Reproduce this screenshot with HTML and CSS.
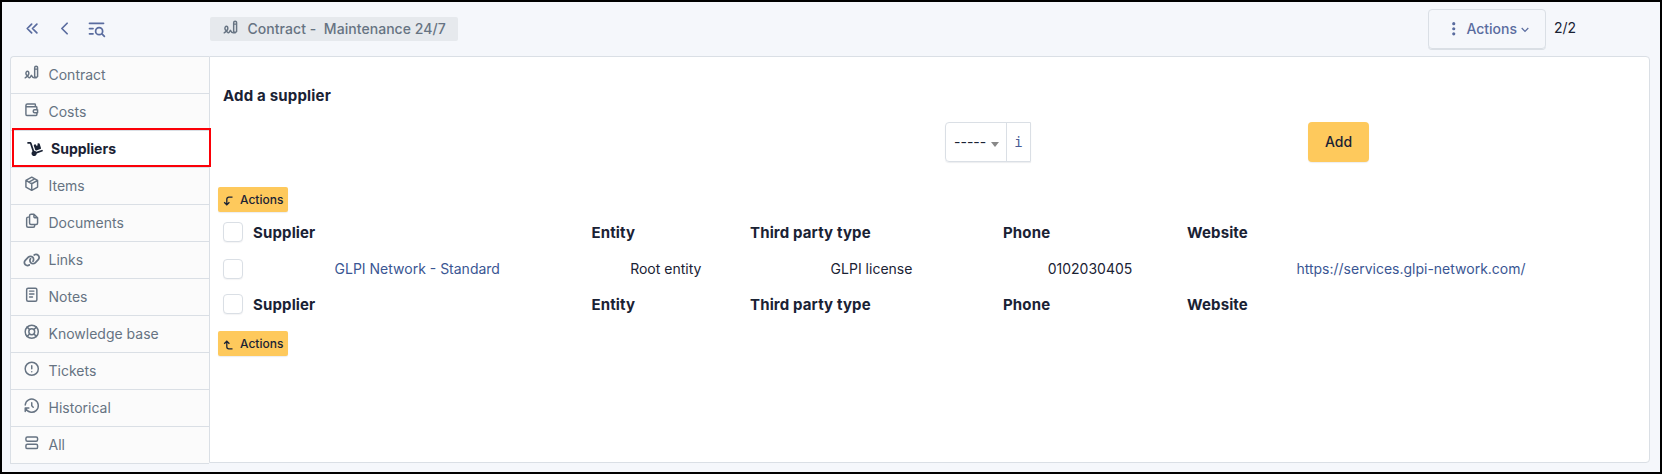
FILE: index.html
```html
<!DOCTYPE html>
<html lang="en">
<head>
<meta charset="utf-8">
<title>Contract - Maintenance 24/7</title>
<link rel="stylesheet" href="styles.css">
</head>
<body>
<div class="frame">
  <header class="topbar">
    <nav class="nav-icons">
      <svg class="ti nav-icon" viewBox="0 0 24 24"><path d="M11 7l-5 5l5 5M17 7l-5 5l5 5"/></svg>
      <svg class="ti nav-icon" viewBox="0 0 24 24"><path d="M15 6l-6 6l6 6"/></svg>
      <svg class="ti nav-icon" viewBox="0 0 24 24"><circle cx="15" cy="15" r="4"/><path d="M18.5 18.5l2.5 2.5M4 6h16M4 12h4M4 18h4"/></svg>
    </nav>
    <div class="badge">
      <svg class="ti" viewBox="0 0 24 24"><path d="M3 19c3.333 -2 5 -4 5 -6c0 -3 -1 -3 -2 -3s-2.032 1.085 -2 3c.034 2.048 1.658 2.877 2.5 4c1.5 2 2.5 2.5 3.5 1c.667 -1 1.167 -1.833 1.5 -2.5c1 2.333 2.333 3.5 4 3.5h2.5M20 17v-12c0 -1.121 -.879 -2 -2 -2s-2 .879 -2 2v12l2 2l2 -2zM16 7h4"/></svg>
      <span class="badge-text">Contract -&nbsp; Maintenance 24/7</span>
    </div>
    <div class="top-right">
      <button class="btn-outline">
        <svg class="ti dots" viewBox="0 0 24 24"><path d="M12 4a1 1 0 1 0 0 2a1 1 0 1 0 0 -2M12 11a1 1 0 1 0 0 2a1 1 0 1 0 0 -2M12 18a1 1 0 1 0 0 2a1 1 0 1 0 0 -2"/></svg>
        <span>Actions</span>
        <svg class="caret" viewBox="0 0 8 6"><path d="M0.7 1l3.3 3.4l3.3 -3.4"/></svg>
      </button>
      <span class="pager">2/2</span>
    </div>
  </header>
  <main class="body">
    <ul class="tabs">
      <li class="tab"><svg class="ti" viewBox="0 0 24 24"><path d="M3 19c3.333 -2 5 -4 5 -6c0 -3 -1 -3 -2 -3s-2.032 1.085 -2 3c.034 2.048 1.658 2.877 2.5 4c1.5 2 2.5 2.5 3.5 1c.667 -1 1.167 -1.833 1.5 -2.5c1 2.333 2.333 3.5 4 3.5h2.5M20 17v-12c0 -1.121 -.879 -2 -2 -2s-2 .879 -2 2v12l2 2l2 -2zM16 7h4"/></svg><span>Contract</span></li>
      <li class="tab"><svg class="ti" viewBox="0 0 24 24"><path d="M17 8v-3a1 1 0 0 0 -1 -1h-10a2 2 0 0 0 0 4h12a1 1 0 0 1 1 1v3m0 4v3a1 1 0 0 1 -1 1h-12a2 2 0 0 1 -2 -2v-12M20 12v4h-4a2 2 0 0 1 0 -4h4"/></svg><span>Costs</span></li>
      <li class="tab active"><svg class="fa dolly" viewBox="0 0 576 512"><path d="M0 32C0 14.3 14.3 0 32 0h72.9c27.5 0 52 17.6 60.7 43.8L257.7 320c30.1 .5 56.8 14.9 74 37l202.1-67.4c16.8-5.6 34.9 3.5 40.5 20.2s-3.5 34.9-20.2 40.5L352 417.7c-.9 52.2-43.5 94.3-96 94.3c-53 0-96-43-96-96c0-30.8 14.5-58.2 37-75.8L104.9 64H32C14.3 64 0 49.7 0 32zM244.8 134.5c-5.5-16.8 3.7-34.9 20.5-40.3L311 79.4l19.8 60.9 60.9-19.8L371.8 59.6l45.7-14.8c16.8-5.5 34.9 3.7 40.3 20.5l49.4 152.2c5.5 16.8-3.7 34.9-20.5 40.3L334.5 307.2c-16.8 5.5-34.9-3.7-40.3-20.5L244.8 134.5z"/></svg><span>Suppliers</span></li>
      <li class="tab"><svg class="ti" viewBox="0 0 24 24"><path d="M12 3l8 4.5v9l-8 4.5l-8 -4.5v-9l8 -4.5M12 12l8 -4.5M12 12v9M12 12l-8 -4.5M16 5.25l-8 4.5"/></svg><span>Items</span></li>
      <li class="tab"><svg class="ti" viewBox="0 0 24 24"><path d="M15 3v4a1 1 0 0 0 1 1h4M18 17h-7a2 2 0 0 1 -2 -2v-10a2 2 0 0 1 2 -2h4l5 5v7a2 2 0 0 1 -2 2zM16 17v2a2 2 0 0 1 -2 2h-7a2 2 0 0 1 -2 -2v-10a2 2 0 0 1 2 -2h2"/></svg><span>Documents</span></li>
      <li class="tab"><svg class="fa link" viewBox="0 0 640 512"><path d="M579.8 267.7c56.5-56.5 56.5-148 0-204.5c-50-50-128.8-56.5-186.3-15.4l-1.6 1.1c-14.4 10.3-17.7 30.3-7.4 44.6s30.3 17.7 44.6 7.4l1.6-1.1c32.1-22.9 76-19.3 103.8 8.6c31.5 31.5 31.5 82.5 0 114L422.3 334.8c-31.5 31.5-82.5 31.5-114 0c-27.9-27.9-31.5-71.8-8.6-103.8l1.1-1.6c10.3-14.4 6.9-34.4-7.4-44.6s-34.4-6.9-44.6 7.4l-1.1 1.6C206.5 251.2 213 330 263 380c56.5 56.5 148 56.5 204.5 0L579.8 267.7zM60.2 244.3c-56.5 56.5-56.5 148 0 204.5c50 50 128.8 56.5 186.3 15.4l1.6-1.1c14.4-10.3 17.7-30.3 7.4-44.6s-30.3-17.7-44.6-7.4l-1.6 1.1c-32.1 22.9-76 19.3-103.8-8.6C74 372 74 321 105.5 289.5L217.7 177.2c31.5-31.5 82.5-31.5 114 0c27.9 27.9 31.5 71.8 8.6 103.9l-1.1 1.6c-10.3 14.4-6.9 34.4 7.4 44.6s34.4 6.9 44.6-7.4l1.1-1.6C433.5 260.8 427 182 377 132c-56.5-56.5-148-56.5-204.5 0L60.2 244.3z"/></svg><span>Links</span></li>
      <li class="tab"><svg class="ti" viewBox="0 0 24 24"><rect x="5" y="3" width="14" height="18" rx="2"/><path d="M9 7h6M9 11h6M9 15h4"/></svg><span>Notes</span></li>
      <li class="tab"><svg class="ti" viewBox="0 0 24 24"><circle cx="12" cy="12" r="4"/><circle cx="12" cy="12" r="9"/><path d="M15 15l3.35 3.35M9 15l-3.35 3.35M5.65 5.65l3.35 3.35M18.35 5.65l-3.35 3.35"/></svg><span>Knowledge base</span></li>
      <li class="tab"><svg class="ti" viewBox="0 0 24 24"><circle cx="12" cy="12" r="9"/><path d="M12 8v4M12 16h.01"/></svg><span>Tickets</span></li>
      <li class="tab"><svg class="ti" viewBox="0 0 24 24"><path d="M12 8v4l2 2M3.05 11a9 9 0 1 1 .5 4m-.5 5v-5h5"/></svg><span>Historical</span></li>
      <li class="tab"><svg class="ti" viewBox="0 0 24 24"><rect x="4" y="4" width="16" height="6" rx="2"/><rect x="4" y="14" width="16" height="6" rx="2"/></svg><span>All</span></li>
    </ul>
    <section class="panel">
      <h2 class="title">Add a supplier</h2>
      <form class="add-form">
        <div class="picker">
          <span class="select">-----<i class="arrow"></i></span>
          <span class="info">i</span>
        </div>
        <button class="btn-add" type="button">Add</button>
      </form>
      <button class="btn-small">
        <svg viewBox="0 0 10 10"><path d="M9.5 1.2h-3.7a2 2 0 0 0 -2 2v5.3M1.2 6.2l2.6 2.6l2.6 -2.6"/></svg>
        <span>Actions</span>
      </button>
      <div class="grid">
        <div class="row head"><span class="check"></span><b>Supplier</b><b>Entity</b><b>Third party type</b><b>Phone</b><b>Website</b></div>
        <div class="row data"><span class="check"></span><a>GLPI Network - Standard</a><span>Root entity</span><span>GLPI license</span><span>0102030405</span><a>https://services.glpi-network.com/</a></div>
        <div class="row foot"><span class="check"></span><b>Supplier</b><b>Entity</b><b>Third party type</b><b>Phone</b><b>Website</b></div>
      </div>
      <button class="btn-small">
        <svg viewBox="0 0 10 10"><path d="M9.5 8.8h-3.7a2 2 0 0 1 -2 -2v-5.3M1.2 3.8l2.6 -2.6l2.6 2.6"/></svg>
        <span>Actions</span>
      </button>
    </section>
  </main>
</div>
</body>
</html>
```
FILE: styles.css
```css
* { box-sizing: border-box; }

body {
  margin: 0;
  font-family: Inter, "Noto Sans", sans-serif;
  font-size: 14px;
  line-height: 20px;
  color: #1a2234;
}

button { font: inherit; color: inherit; margin: 0; }

.frame {
  width: 1662px;
  height: 474px;
  border: 2px solid #000;
  background: #f5f7fb;
  overflow: hidden;
}

.ti {
  width: 17.5px;
  height: 17.5px;
  flex: none;
  fill: none;
  stroke: currentColor;
  stroke-width: 2;
  stroke-linecap: round;
  stroke-linejoin: round;
}

.fa { flex: none; fill: currentColor; }

/* Top bar */
.topbar {
  display: flex;
  align-items: flex-start;
  height: 54px;
  padding: 7px 84px 0 20px;
}

.nav-icons {
  display: flex;
  gap: 11px;
  width: 188px;
  padding-top: 9px;
  color: #5a6c9f;
}

.nav-icon { width: 21px; height: 21px; }

.badge {
  display: flex;
  align-items: center;
  gap: 8px;
  width: 248px;
  height: 24px;
  margin-top: 8px;
  padding-left: 12px;
  border-radius: 2px;
  background: #e6e9ed;
  color: #667382;
  font-weight: 500;
  letter-spacing: 0.05px;
  white-space: nowrap;
}

.badge .ti { margin-top: -3px; }

.top-right {
  display: flex;
  gap: 8px;
  margin-left: auto;
}

.btn-outline {
  display: flex;
  align-items: center;
  width: 118px;
  height: 40px;
  padding: 0 0 0 16px;
  border: 1px solid #dadfe5;
  border-radius: 4px;
  background: transparent;
  box-shadow: 0 1px 0 #dadfe5;
  color: #5a6c9f;
  font-weight: 500;
}

.dots { margin: -1px 4px 0 0; stroke-width: 2.4; }

.caret {
  width: 8px;
  height: 6px;
  margin: 2px 0 0 4px;
  fill: none;
  stroke: currentColor;
  stroke-width: 1.2;
}

.pager { padding-top: 9px; }

/* Side tabs */
.body {
  display: flex;
  align-items: flex-start;
  padding-left: 8px;
}

.tabs {
  width: 199px;
  margin: 0;
  padding: 0;
  list-style: none;
  border: 1px solid #dadfe5;
  border-right: 0;
  border-radius: 4px 0 0 0;
}

.tab {
  display: flex;
  align-items: center;
  gap: 8px;
  height: 37px;
  padding-left: 12px;
  border-bottom: 1px solid #dadfe5;
  background: #fbfbfb;
  color: #667382;
  font-size: 14px;
}

.tab:first-child { border-top-left-radius: 4px; }
.tab:last-child { height: 36px; border-bottom: 0; }
.tab .ti { margin-top: -4px; }

.tab.active {
  position: relative;
  padding-left: 16px;
  background: #fff;
  color: #1a2234;
  font-weight: 700;
}

.tab.active::after {
  content: "";
  position: absolute;
  inset: -3px -2px 0 1px;
  border: 2px solid #fb0007;
}

.dolly { width: 16px; height: 14px; margin-top: -1px; }
.link { width: 17.5px; height: 14px; margin-top: -1px; }

/* Content panel */
.panel {
  width: 1441px;
  height: 407px;
  padding: 29px 9px 0 8px;
  border: 1px solid #dadfe5;
  border-radius: 0 4px 4px 0;
  background: #fff;
}

.title {
  margin: 0 0 16px 5px;
  font-size: 15px;
  line-height: 20px;
  font-weight: 700;
  letter-spacing: 0.18px;
}

.add-form {
  display: flex;
  align-items: center;
  height: 40px;
  margin-bottom: 25px;
  padding-left: 727px;
}

.picker {
  display: flex;
  width: 86px;
  height: 40px;
  margin-right: 277px;
  border: 1px solid #dadfe5;
  border-radius: 4px 0 0 4px;
  box-shadow: 0 1px 1px rgba(30, 41, 59, 0.08);
}

.select {
  display: flex;
  align-items: center;
  width: 61px;
  padding-left: 8px;
  border-right: 1px solid #dadfe5;
}

.arrow {
  margin: 4px 0 0 5px;
  border: 4px solid transparent;
  border-top: 5px solid #888;
  border-bottom: 0;
}

.info {
  flex: 1;
  text-align: center;
  line-height: 38px;
  font-family: "DejaVu Sans Mono", monospace;
  color: #4a5d96;
}

.btn-add {
  width: 61px;
  height: 40px;
  padding: 0;
  border: 0;
  border-radius: 4px;
  background: #fec95c;
  box-shadow: 0 1px 1px rgba(30, 41, 59, 0.08);
  font-weight: 500;
}

.btn-small {
  display: flex;
  align-items: center;
  gap: 7px;
  width: 70px;
  height: 25px;
  padding: 0 0 0 5px;
  border: 0;
  border-radius: 2px;
  background: #fec95c;
  box-shadow: 0 1px 1px rgba(30, 41, 59, 0.08);
  font-size: 12px;
  font-weight: 500;
}

.btn-small svg {
  width: 10px;
  height: 10px;
  margin-top: 3px;
  fill: none;
  stroke: currentColor;
  stroke-width: 1.3;
}

/* Supplier list */
.grid { padding: 2px 0 11px; }

.row {
  display: grid;
  grid-template-columns: 30px 338.5px 158.5px 253px 184px 458px;
  align-items: center;
}

.row > :not(.check) { padding: 0 5px; }
.row.head { height: 36px; }
.row.foot { height: 32px; }
.row > b {
  margin-top: 2px;
  font-size: 15px;
  letter-spacing: 0.14px;
}
.row.data { height: 38px; text-align: center; }
.row.data a { color: #3a5693; }

.check {
  width: 20px;
  height: 20px;
  margin-left: 5px;
  border: 1px solid #dadfe5;
  border-radius: 4px;
  background: #fff;
  box-shadow: 0 1px 1px rgba(30, 41, 59, 0.05);
}
```
